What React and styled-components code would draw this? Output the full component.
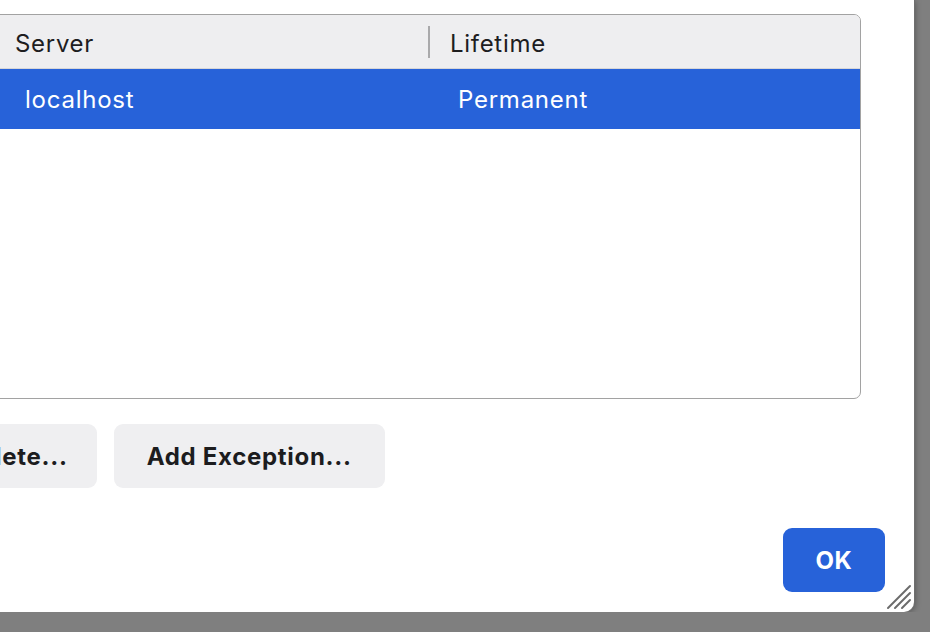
import React from 'react';
import styled, { createGlobalStyle } from 'styled-components';

const Global = createGlobalStyle`
  html, body {
    margin: 0;
    padding: 0;
    background: #7f7f7f;
    overflow: hidden;
  }
  body {
    font-family: Inter, "Noto Sans", sans-serif;
  }
`;

const Dialog = styled.div`
  position: relative;
  box-sizing: border-box;
  width: 975px;
  height: 612px;
  margin-left: -61px;
  padding: 14px 53px 0 0;
  background: #ffffff;
  border-bottom-right-radius: 10px;
  box-shadow: 0 0 0 1px #6f6f6f, 1px 1px 6px rgba(0, 0, 0, 0.35);
  display: flex;
  flex-direction: column;
`;

const Table = styled.div`
  box-sizing: border-box;
  height: 385px;
  margin-left: 21px;
  border: 1px solid #a2a2a2;
  border-radius: 0 7px 7px 0;
  overflow: hidden;
  display: flex;
  flex-direction: column;
`;

const HeaderRow = styled.div`
  display: grid;
  grid-template-columns: 469px 1fr;
  height: 53px;
  background: #eeeef0;
  border-bottom: 1px solid #d6d6d8;
`;

const HeaderCell = styled.div`
  position: relative;
  display: flex;
  align-items: center;
  padding-left: ${p => p.$pad}px;
  padding-top: 3px;
  font-size: 24px;
  letter-spacing: 0.7px;
  color: #1d1d1f;
  ${p => p.$divider && `
    &::after {
      content: '';
      position: absolute;
      right: 0;
      top: 11px;
      bottom: 10px;
      width: 2px;
      background: #a9a9ab;
    }
  `}
`;

const Row = styled.div`
  display: grid;
  grid-template-columns: 469px 1fr;
  height: 60px;
  background: ${p => (p.$selected ? '#2762d9' : 'transparent')};
  color: ${p => (p.$selected ? '#ffffff' : '#1d1d1f')};
`;

const Cell = styled.div`
  display: flex;
  align-items: center;
  padding-left: ${p => p.$pad}px;
  padding-top: 1px;
  font-size: 24px;
  letter-spacing: 0.75px;
`;

const ButtonRow = styled.div`
  display: flex;
  gap: 17px;
  margin-top: 25px;
  margin-left: -14px;
`;

const Button = styled.button`
  height: 64px;
  padding: 0 ${p => p.$padRight || 33}px 0 ${p => p.$padLeft || 33}px;
  border: none;
  border-radius: 9px;
  background: ${p => (p.$primary ? '#2762d9' : '#efeff1')};
  color: ${p => (p.$primary ? '#ffffff' : '#1c1c1e')};
  font-family: Inter, "Noto Sans", sans-serif;
  font-weight: 700;
  font-size: 24px;
  letter-spacing: 0.7px;
`;

const Footer = styled.div`
  margin-top: auto;
  margin-bottom: 20px;
  margin-right: -24px;
  display: flex;
  justify-content: flex-end;
`;

const OkButton = styled(Button)`
  width: 102px;
  padding: 0;
`;

const Grip = styled.svg`
  position: absolute;
  right: 2px;
  bottom: 2px;
`;

export default function App() {
  return (
    <>
      <Global />
      <Dialog>
        <Table>
          <HeaderRow>
            <HeaderCell $pad={54} $divider>Server</HeaderCell>
            <HeaderCell $pad={20}>Lifetime</HeaderCell>
          </HeaderRow>
          <Row $selected>
            <Cell $pad={64}>localhost</Cell>
            <Cell $pad={28}>Permanent</Cell>
          </Row>
        </Table>
        <ButtonRow>
          <Button $padLeft={37} $padRight={29}>Delete...</Button>
          <Button>Add Exception...</Button>
        </ButtonRow>
        <Footer>
          <OkButton $primary>OK</OkButton>
        </Footer>
        <Grip width="26" height="26" viewBox="0 0 26 26">
          <g stroke="#6b6b6b" strokeWidth="2" strokeLinecap="round">
            <line x1="2" y1="24" x2="24" y2="2" />
            <line x1="9" y1="24" x2="24" y2="9" />
            <line x1="16" y1="24" x2="24" y2="16" />
          </g>
        </Grip>
      </Dialog>
    </>
  );
}
